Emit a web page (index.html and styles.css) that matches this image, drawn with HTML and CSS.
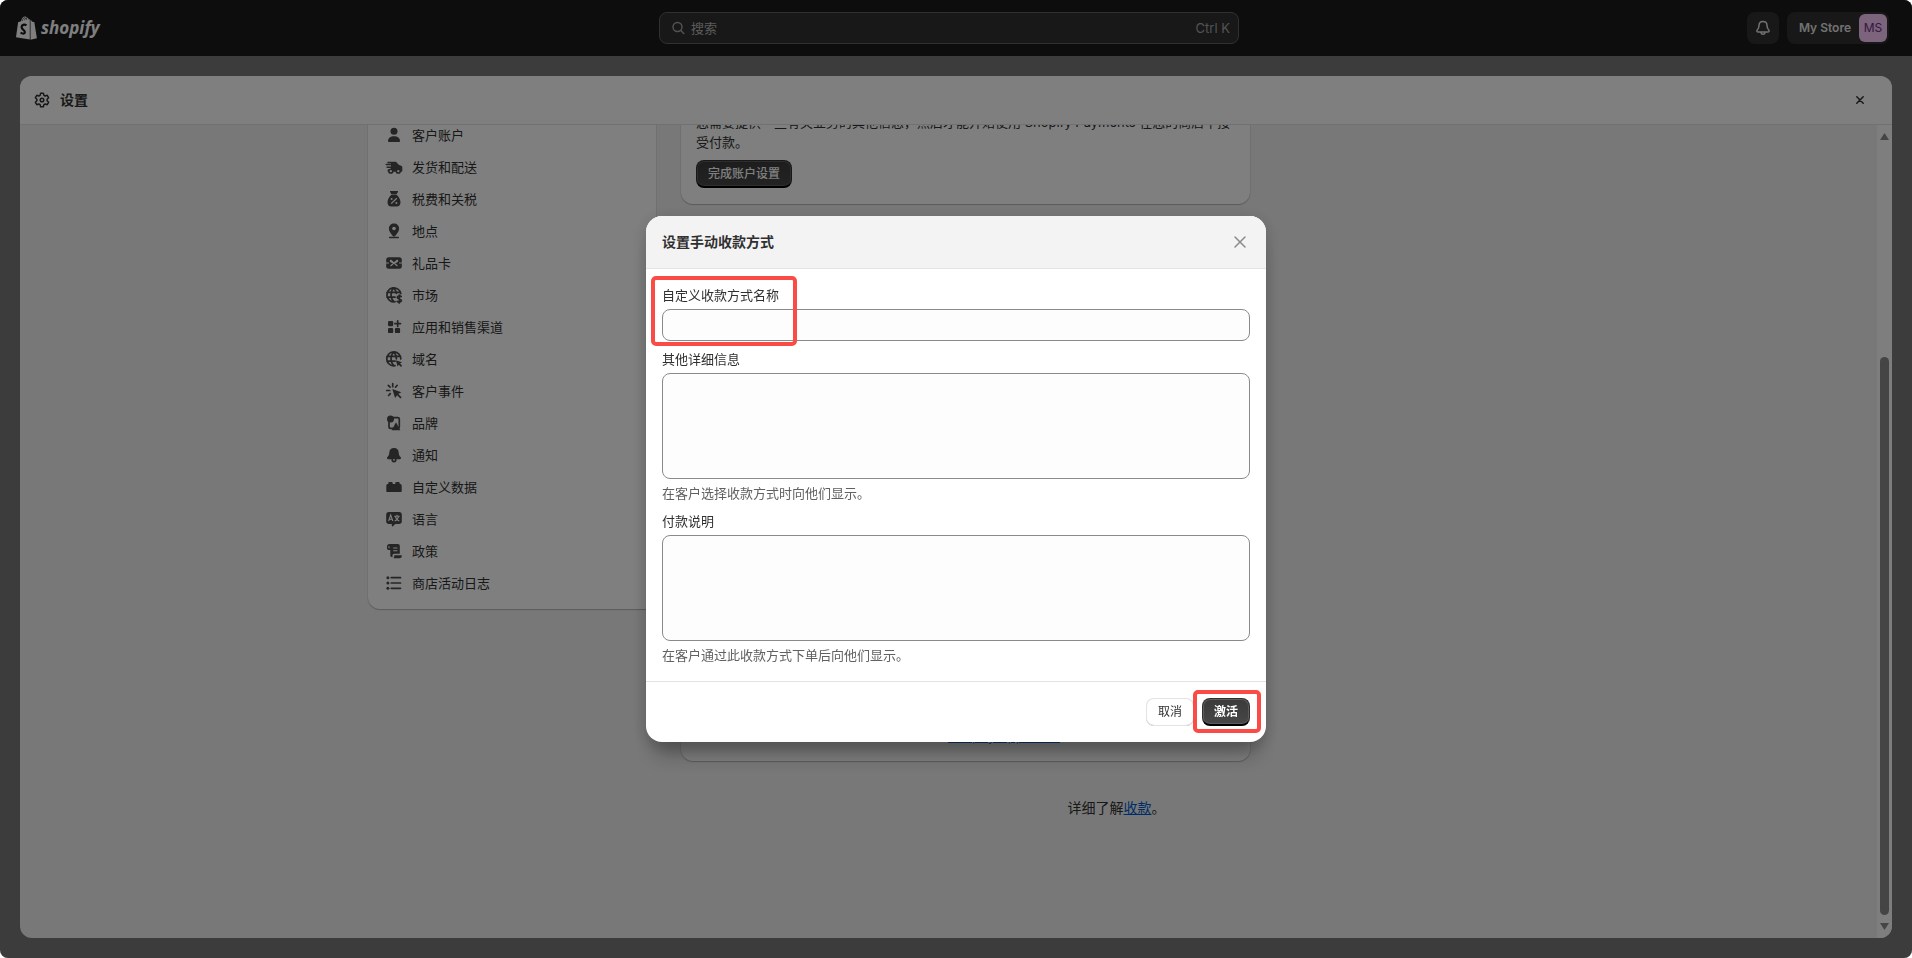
FILE: index.html
```html
<!DOCTYPE html>
<html lang="zh-CN">
<head>
<meta charset="utf-8">
<meta name="viewport" content="width=device-width, initial-scale=1">
<title>设置 · My Store</title>
<link rel="stylesheet" href="styles.css">
</head>
<body>
<div class="app">
  <header class="topbar">
    <a class="brand" href="#" aria-label="Shopify">
      <svg class="brand-bag" viewBox="0 0 21 24" aria-hidden="true">
        <path d="M2.1 6.2 5 5.3C5.6 2.6 7.300.6 9.100.6c.8 0 1.300.3 1.700.9.9 0 1.600.8 2 2.100l1-.3v20.300L0 21.300z" fill="#fff"/>
        <path d="M14.500 3.500v20.200l6.400-1.500L18.300 6l-2-.2z" fill="#fff"/>
        <path d="M6.100 5c.5-1.900 1.700-3.300 2.900-3.300M8.500 4.300c.3-1.400 1-2.200 2-2.400M9.900 1.800c.7.6.8 1.400.8 2" fill="none" stroke="#1a1a1a" stroke-width=".7"/>
        <path d="M10.500 9.200c-2.400-1.300-4.900-.2-4.900 2 0 2.600 3.500 2.700 3.300 5-.1 1.900-2.500 1.800-4.300.3" fill="none" stroke="#1a1a1a" stroke-width="2.200"/>
      </svg>
      <span class="brand-name">shopify</span>
    </a>
    <label class="search">
      <svg class="icon-16" viewBox="0 0 16 16" fill="none" stroke="currentColor" stroke-width="1.400" stroke-linecap="round" aria-hidden="true"><circle cx="7.500" cy="7" r="4.500"/><path d="m10.800 10.500 3 3"/></svg>
      <input class="search-input" type="text" placeholder="搜索" aria-label="搜索">
      <span class="search-key">Ctrl K</span>
    </label>
    <div class="account">
      <button class="bell" type="button" aria-label="通知">
        <svg class="icon-16" viewBox="0 0 16 16" fill="none" stroke="currentColor" stroke-width="1.500" stroke-linejoin="round" aria-hidden="true"><path d="M8 1.500c-2.500 0-4 1.800-4 4 0 2.500-.8 3.500-1.900 4.700-.6.7-.2 1.700.7 1.700h10.400c.9 0 1.300-1 .7-1.700C12.800 9 12 8 12 5.500c0-2.200-1.500-4-4-4z"/><path d="M6 12c0 3 4 3 4 0"/></svg>
      </button>
      <button class="store" type="button"><span>My Store</span><span class="avatar">MS</span></button>
    </div>
  </header>

  <main class="panel">
    <div class="panel-head">
      <svg class="icon-16" viewBox="0 0 16 16" fill="none" stroke="currentColor" stroke-width="1.500" stroke-linejoin="round" aria-hidden="true"><path d="M6.600 1.200h2.800l.5 2.100 1.300.7 2-.7 1.400 2.400-1.500 1.500v1.600l1.500 1.500-1.400 2.400-2-.7-1.300.7-.5 2.100H6.600l-.5-2.100-1.300-.7-2 .7-1.400-2.400 1.500-1.500V7.200L1.400 5.700l1.400-2.400 2 .7 1.300-.7z"/><circle cx="8" cy="8" r="1.800"/></svg>
      <h1 class="panel-title">设置</h1>
      <button class="panel-close" type="button" aria-label="关闭">
        <svg viewBox="0 0 8 8" fill="none" stroke="currentColor" stroke-width="1.500" stroke-linecap="round"><path d="m.8.8 6.400 6.400M7.200.8.8 7.200"/></svg>
      </button>
    </div>

    <div class="panel-body">
      <div class="columns">
        <nav class="nav" aria-label="设置">
          <a class="nav-item" href="#"><svg viewBox="0 0 20 20" aria-hidden="true"><circle cx="10" cy="6.300" r="3.500"/><path d="M4 16.300c0-3.500 2.500-5 6-5s6 1.500 6 5c0 .4-.3.6-.8.6H4.800c-.5 0-.8-.2-.8-.6z"/></svg>客户账户</a>
          <a class="nav-item" href="#"><svg viewBox="0 0 20 20" aria-hidden="true"><path d="M4 4.800h8l2.700 3 2.900 1.200c.5.2.7.5.7 1v4c0 .6-.3.8-.8.8H4.500c-.6 0-.9-.3-.9-.8v-1.400l3.400-.2V11H2.600V9.600H7V8.200H2.200c-1 0-1-1.400 0-1.400H7v-.5H4c-1 0-1-1.500 0-1.500z"/><g class="ring"><circle cx="6.800" cy="14.200" r="1.900"/><circle cx="14.300" cy="14.200" r="1.900"/></g></svg>发货和配送</a>
          <a class="nav-item" href="#"><svg viewBox="0 0 20 20" aria-hidden="true"><path d="M6.600 2h6.800c.6 0 .8.500.5 1l-1.400 2.200h-5L6.100 3c-.3-.5-.1-1 .5-1zM7.500 5.800h5c2.300 1.800 4 4.900 4 7.500 0 2.600-1.500 4.300-3.800 4.300H7.300c-2.300 0-3.800-1.700-3.800-4.300 0-2.600 1.700-5.700 4-7.500z"/><path class="cut" d="m7.200 14.600 5.600-5.400"/><circle class="hole" cx="7.600" cy="10" r="1"/><circle class="hole" cx="12.400" cy="13.900" r="1"/></svg>税费和关税</a>
          <a class="nav-item" href="#"><svg viewBox="0 0 20 20" aria-hidden="true"><path d="M10 2.500c-3 0-5.100 2.100-5.100 5 0 3 2.200 5.300 3.900 7.400.7.900 1.700.9 2.400 0 1.700-2.100 3.900-4.400 3.900-7.400 0-2.900-2.100-5-5.100-5z"/><circle class="hole" cx="10" cy="7.500" r="1.800"/><rect x="4.900" y="15.700" width="10.200" height="1.600" rx=".8"/></svg>地点</a>
          <a class="nav-item" href="#"><svg viewBox="0 0 20 20" aria-hidden="true"><rect x="2.200" y="4.300" width="15.600" height="11.400" rx="2.500"/><path class="cut thin" d="M2 10h3M15 10h3M6.500 7l7 6M13.500 7l-7 6M6.500 7c-.8 1.500.8 2.600 3.500 2.600S14.300 8.500 13.500 7"/></svg>礼品卡</a>
          <a class="nav-item" href="#"><svg viewBox="0 0 20 20" aria-hidden="true"><path class="line" d="M11 16.700a7 7 0 1 1 5.800-8M3 7.400h13.500M3 12.200h8M9.700 2.800c-3.600 4-3.600 10 0 14M9.700 2.800c1.600 1.700 2.500 3.500 2.700 5.500"/><path class="line" d="M17.200 11.500c-1.500-1-3.900-.6-3.900.9 0 1.900 4.100 1.200 4.100 3.200 0 1.600-2.700 1.900-4.200.9M15.300 10v8"/></svg>市场</a>
          <a class="nav-item" href="#"><svg viewBox="0 0 20 20" aria-hidden="true"><rect x="4" y="4" width="5.200" height="5.200" rx="1.200"/><rect x="4" y="10.900" width="5.200" height="5.200" rx="1.200"/><rect x="10.900" y="10.900" width="5.200" height="5.200" rx="1.200"/><path class="line" d="M13.700 3.800v5.600M10.900 6.600h5.600"/></svg>应用和销售渠道</a>
          <a class="nav-item" href="#"><svg viewBox="0 0 20 20" aria-hidden="true"><path class="line" d="M11 16.700A7 7 0 1 1 16.800 10M3 7.400h13.500M3 12.200h8M9.700 2.800c-3.600 4-3.600 10 0 14M9.700 2.800c1.800 2 2.700 4.500 2.700 7"/><path d="m11.800 11.300 6.200 2-2 1.300 2.200 2.200-1.200 1.200-2.200-2.200-1.200 1.800z"/></svg>域名</a>
          <a class="nav-item" href="#"><svg viewBox="0 0 20 20" aria-hidden="true"><path class="line" d="M8.700 2.700v3M4.300 4.300l1.800 1.900M2.700 9.500h3M4.600 14.500l1.700-1.800M13.200 4.300l-1.700 1.900"/><path d="m8.300 8 9 3.200-3 1.800 3.300 3.300-1.200 1.200-3.300-3.300-2 2.800z"/></svg>客户事件</a>
          <a class="nav-item" href="#"><svg viewBox="0 0 20 20" aria-hidden="true"><rect class="line" x="5" y="4.700" width="10.300" height="10.700" rx="1.500"/><circle cx="6.500" cy="6" r="3.500"/><path d="m12 9.300 4.300 7.900H7.700z"/></svg>品牌</a>
          <a class="nav-item" href="#"><svg viewBox="0 0 20 20" aria-hidden="true"><path d="M10 3c-3 0-4.700 2-4.700 4.500 0 2.400-.8 3.400-1.900 4.500-.8.900-.4 2.300.8 2.300h11.600c1.200 0 1.600-1.400.8-2.300-1.100-1.100-1.900-2.100-1.900-4.500C14.700 5 13 3 10 3z"/><path class="line" d="M8.200 14.500c0 2.900 3.600 2.900 3.600 0"/></svg>通知</a>
          <a class="nav-item" href="#"><svg viewBox="0 0 20 20" aria-hidden="true"><path d="M4.300 6.200c0-.7.500-1.200 1.200-1.200h2c.7 0 1.200.5 1.200 1.200v.8h2.600v-.8c0-.7.500-1.200 1.200-1.200h2c.7 0 1.200.5 1.200 1.200V7c1.300 0 2 .7 2 1.700v5.200c0 .7-.4 1.100-1.100 1.100H3.400c-.7 0-1.100-.4-1.100-1.100V8.700c0-1 .7-1.700 2-1.700z"/></svg>自定义数据</a>
          <a class="nav-item" href="#"><svg viewBox="0 0 20 20" aria-hidden="true"><path d="M4.800 3h10.400c1.600 0 2.600 1 2.600 2.500v7c0 1.500-1 2.500-2.600 2.500h-4L9 17.200c-.5.500-1.200.2-1.200-.5V15h-3c-1.600 0-2.600-1-2.600-2.500v-7C2.200 4 3.200 3 4.800 3z"/><path class="cut thin" d="m4.600 12 2.100-6 2.100 6M5.300 10.200h2.800M10.300 7.300h5.400M13 5.800v1.500M11.300 7.500c.5 2 2 3.600 4 4.500M14.700 7.500c-.5 2-2 3.600-4 4.500"/></svg>语言</a>
          <a class="nav-item" href="#"><svg viewBox="0 0 20 20" aria-hidden="true"><path d="M5.500 3h8.300c1.300 0 2 .8 2 2v7.800H10c-1.200 0-1.500 1-1.500 2v1.500c-1.400 0-2.200-.8-2.200-2V9H4.800C3.700 9 3 8.300 3 7.200V5.500C3 4 4 3 5.500 3z"/><path class="cut thin" d="M9.200 7h4.200M9.200 9.800h4.200M5 5.200v2"/><path d="M10.300 14.300h6.600c.7 0 1 .4.900 1-.2 1.200-1 1.900-2.200 1.900H9.300c.8-.6 1-1.600 1-2.900z"/></svg>政策</a>
          <a class="nav-item" href="#"><svg viewBox="0 0 20 20" aria-hidden="true"><circle cx="3.900" cy="4.700" r="1.500"/><circle cx="3.900" cy="10" r="1.500"/><circle cx="3.900" cy="15.300" r="1.500"/><path class="line" d="M7.300 4.700h9.200M7.300 10h9.200M7.300 15.300h9.200"/></svg>商店活动日志</a>
        </nav>
        <div class="content">
          <section class="card">
            <p>您需要提供一些有关业务的其他信息，然后才能开始使用 Shopify Payments 在您的商店中接受付款。</p>
            <button class="btn btn-dark" type="button">完成账户设置</button>
          </section>
          <section class="card card-second">
            <a class="link" href="#">Shopify App Store</a>
          </section>
          <p class="learn">详细了解<a class="link" href="#">收款</a>。</p>
        </div>
      </div>
      <div class="scrollbar" aria-hidden="true">
        <svg class="arrow" viewBox="0 0 9 7"><path d="M4.500 0 9 7H0z"/></svg>
        <div class="track"><div class="thumb"></div></div>
        <svg class="arrow" viewBox="0 0 9 7"><path d="M4.500 7 9 0H0z"/></svg>
      </div>
    </div>
  </main>
</div>

<div class="overlay">
  <form class="modal" role="dialog" aria-labelledby="modal-title">
    <div class="modal-head">
      <h2 class="modal-title" id="modal-title">设置手动收款方式</h2>
      <button class="modal-close" type="button" aria-label="关闭">
        <svg viewBox="0 0 12 12" fill="none" stroke="currentColor" stroke-width="1.500" stroke-linecap="round"><path d="m1 1 10 10M11 1 1 11"/></svg>
      </button>
    </div>
    <div class="modal-body">
      <div class="field field-marked">
        <label for="name">自定义收款方式名称</label>
        <input class="box" id="name" type="text">
        <span class="marker marker-field"></span>
      </div>
      <div class="field">
        <label for="details">其他详细信息</label>
        <textarea class="box box-tall" id="details"></textarea>
        <p class="help">在客户选择收款方式时向他们显示。</p>
      </div>
      <div class="field">
        <label for="notes">付款说明</label>
        <textarea class="box box-tall" id="notes"></textarea>
        <p class="help">在客户通过此收款方式下单后向他们显示。</p>
      </div>
    </div>
    <div class="modal-foot">
      <button class="btn btn-light" type="button">取消</button>
      <div class="action">
        <button class="btn btn-dark btn-strong" type="submit">激活</button>
        <span class="marker marker-action"></span>
      </div>
    </div>
  </form>
</div>
</body>
</html>
```

FILE: styles.css
```css
* {
  box-sizing: border-box;
}

html {
  background: #fff;
}

body {
  margin: 0;
  font-family: Inter, "Noto Sans CJK SC", sans-serif;
  font-size: 13px;
  line-height: 20px;
  color: #303030;
}

h1,
h2,
p {
  margin: 0;
}

button,
input,
textarea {
  font: inherit;
  color: inherit;
}

button {
  border: 0;
  padding: 0;
  background: none;
}

svg {
  display: block;
  flex: none;
}

.icon-16 {
  width: 16px;
  height: 16px;
}

/* App frame */
.app {
  display: flex;
  flex-direction: column;
  height: 100vh;
  overflow: hidden;
  border-radius: 8px;
  background: #797979;
}

.topbar {
  display: grid;
  grid-template-columns: 1fr minmax(0, 580px) 1fr;
  align-items: center;
  height: 56px;
  padding: 0 23px 0 9px;
  background: #1a1a1a;
  color: #e3e3e3;
}

.brand {
  display: flex;
  align-items: center;
  gap: 4px;
  padding-left: 7px;
  color: #fff;
  text-decoration: none;
}

.brand-bag {
  width: 21px;
  height: 24px;
}

.brand-name {
  font: italic 700 17px/24px "Open Sans", sans-serif;
}

.search {
  display: flex;
  align-items: center;
  gap: 5px;
  height: 32px;
  padding: 0 8px 0 10px;
  border: 1px solid #616161;
  border-radius: 8px;
  background: #303030;
  color: #a6a6a6;
}

.search-input {
  flex: 1;
  min-width: 0;
  padding: 0;
  border: 0;
  outline: 0;
  background: none;
}

.search-input::placeholder {
  color: #b5b5b5;
  opacity: 1;
}

.account {
  display: flex;
  justify-content: flex-end;
  gap: 8px;
}

.bell {
  display: grid;
  place-items: center;
  width: 32px;
  height: 32px;
  border-radius: 8px;
  background: #303030;
}

.store {
  display: flex;
  align-items: center;
  gap: 8px;
  height: 32px;
  padding: 0 2px 0 12px;
  border-radius: 8px;
  background: #303030;
  font-weight: 600;
  font-size: 12px;
}

.avatar {
  width: 28px;
  border-radius: 6px;
  background: #f8c8f8;
  color: #6b2f82;
  font-weight: 400;
  line-height: 28px;
  text-align: center;
}

/* Settings panel */
.panel {
  display: flex;
  flex: 1;
  flex-direction: column;
  min-height: 0;
  margin: 20px;
  overflow: hidden;
  border-radius: 12px;
  background: #f1f1f1;
}

.panel-head {
  display: flex;
  align-items: center;
  gap: 10px;
  height: 49px;
  padding: 0 24px 0 14px;
  border-bottom: 1px solid #e3e3e3;
  background: #fff;
}

.panel-title {
  flex: 1;
  font-size: 14px;
  font-weight: 600;
  line-height: 20px;
}

.panel-close {
  display: grid;
  place-items: center;
  width: 16px;
  height: 16px;
}

.panel-close svg {
  width: 8px;
  height: 8px;
}

.panel-body {
  position: relative;
  flex: 1;
  min-height: 0;
  overflow: hidden;
}

.columns {
  display: flex;
  align-items: flex-start;
  gap: 25px;
  max-width: 1176px;
  margin: 0 auto;
}

.nav,
.card {
  border-radius: 12px;
  background: #fff;
  box-shadow: 0 1px 1px #b5b5b5, 0 0 0 1px #e6e6e6;
}

/* The page is scrolled down, so both columns start above the fold. */
.nav {
  display: flex;
  flex: none;
  flex-direction: column;
  gap: 4px;
  width: 288px;
  margin-top: -16px;
  padding: 12px 8px;
}

.nav-item {
  display: flex;
  align-items: center;
  gap: 8px;
  height: 28px;
  padding: 0 8px;
  color: inherit;
  text-decoration: none;
}

.nav-item svg {
  width: 20px;
  height: 20px;
  fill: #4a4a4a;
}

.nav-item .hole {
  fill: #fff;
}

.nav-item .cut {
  fill: none;
  stroke: #fff;
  stroke-width: 1.3;
}

.nav-item .thin {
  stroke-width: 1.1;
}

.nav-item .line {
  fill: none;
  stroke: #4a4a4a;
  stroke-width: 1.7;
  stroke-linecap: round;
}

.nav-item .ring {
  fill: #fff;
  stroke: #4a4a4a;
  stroke-width: 1.5;
}

.content {
  display: flex;
  flex: 1;
  flex-direction: column;
  gap: 16px;
  min-width: 0;
  margin-top: -29px;
}

.card {
  display: flex;
  flex-direction: column;
  align-items: flex-start;
  gap: 8px;
  max-width: 569px;
  padding: 16px 15px;
}

.card-second {
  align-items: center;
  justify-content: flex-end;
  height: 541px;
  padding: 15px 15px 15px 92px;
}

.link {
  color: #005bd3;
  text-decoration: underline;
}

.learn {
  padding: 20px 16px 20px 24px;
  font-size: 14px;
  line-height: 22px;
  text-align: center;
}

.scrollbar {
  position: absolute;
  top: 0;
  right: 0;
  bottom: 0;
  display: flex;
  flex-direction: column;
  align-items: center;
  width: 15px;
  padding: 8px 0;
  background: #fcfcfc;
}

.arrow {
  width: 9px;
  height: 7px;
  fill: #8b8b8b;
}

.track {
  display: flex;
  flex: 1;
  flex-direction: column;
  justify-content: flex-end;
  padding: 8px 0;
}

.thumb {
  width: 9px;
  height: 72.7%;
  border-radius: 5px;
  background: #8b8b8b;
}

/* Buttons */
.btn {
  height: 28px;
  padding: 0 12px;
  border-radius: 8px;
  font-size: 12px;
  line-height: 16px;
}

.btn-dark {
  border: 1px solid #303030;
  border-bottom: 2px solid #000;
  padding: 0 11px;
  background: linear-gradient(#3a3a3a, #474747);
  box-shadow: inset 0 0 0 1px #5c5c5c;
  color: #fff;
  font-weight: 500;
}

.btn-strong {
  font-weight: 600;
}

.btn-light {
  background: #fff;
  box-shadow: inset 0 0 0 1px #e3e3e3, inset 0 -1px 0 #b5b5b5;
}

/* Dialog */
.overlay {
  position: fixed;
  inset: 0;
  display: flex;
  align-items: center;
  justify-content: center;
  border-radius: 8px;
  background: rgba(0, 0, 0, 0.5);
}

.modal {
  width: 620px;
  max-width: 100%;
  border-radius: 16px;
  background: #fff;
  box-shadow: 0 20px 20px -8px rgba(26, 26, 26, 0.35), 0 4px 16px rgba(26, 26, 26, 0.2);
}

.modal-head {
  display: flex;
  align-items: center;
  justify-content: space-between;
  height: 53px;
  padding: 0 16px;
  border-bottom: 1px solid #e3e3e3;
  border-radius: 16px 16px 0 0;
  background: #f3f3f3;
}

.modal-title {
  font-size: 14px;
  font-weight: 600;
  line-height: 20px;
}

.modal-close {
  display: grid;
  place-items: center;
  width: 20px;
  height: 20px;
  color: #8a8a8a;
}

.modal-close svg {
  width: 12px;
  height: 12px;
}

.modal-body {
  display: flex;
  flex-direction: column;
  gap: 8px;
  padding: 16px;
}

.field {
  display: flex;
  flex-direction: column;
  gap: 4px;
}

.field-marked,
.action {
  position: relative;
}

.box {
  width: 100%;
  height: 32px;
  padding: 6px 12px;
  border: 1px solid #8a8a8a;
  border-radius: 8px;
  outline: 0;
  background: #fdfdfd;
}

.box-tall {
  height: 106px;
  resize: none;
}

.help {
  color: #616161;
}

.modal-foot {
  display: flex;
  justify-content: flex-end;
  gap: 8px;
  padding: 16px;
  border-top: 1px solid #e3e3e3;
}

.marker {
  position: absolute;
  border: 4px solid #fb4b47;
  border-radius: 5px;
  pointer-events: none;
}

.marker-field {
  top: -9px;
  left: -11px;
  width: 146px;
  height: 70px;
}

.marker-action {
  inset: -8px -11px -7px -9px;
}
```
